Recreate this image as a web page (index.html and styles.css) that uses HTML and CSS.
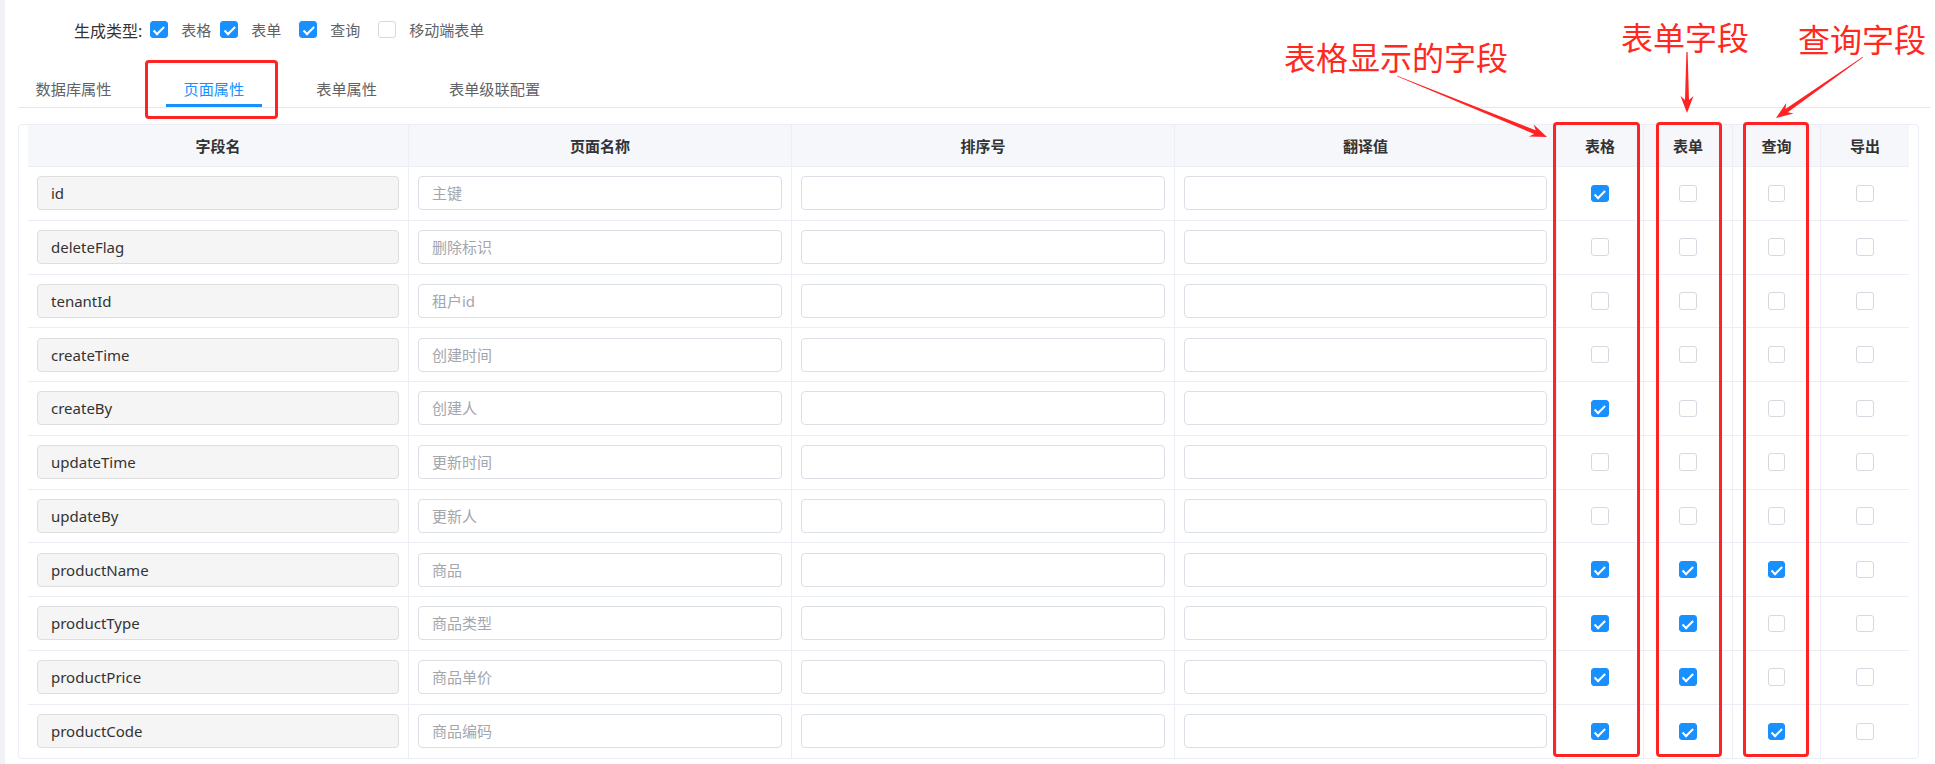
FILE: index.html
```html
<!DOCTYPE html>
<html lang="zh-CN">
<head>
<meta charset="utf-8">
<title>页面属性</title>
<link rel="stylesheet" href="styles.css">
</head>
<body>
<div class="page">
  <div class="edge"></div>
  <div class="main">
    <div class="gen-row">
      <span class="gen-label">生成类型:</span>
      <label class="gen-item tight"><span class="cb on"></span>表格</label>
      <label class="gen-item"><span class="cb on"></span>表单</label>
      <label class="gen-item"><span class="cb on"></span>查询</label>
      <label class="gen-item"><span class="cb"></span>移动端表单</label>
    </div>
    <div class="tabs">
      <div class="tab">数据库属性</div>
      <div class="tab active">页面属性</div>
      <div class="tab">表单属性</div>
      <div class="tab">表单级联配置</div>
    </div>
    <div class="table-box">
      <div class="tr th">
        <div class="c">字段名</div>
        <div class="c">页面名称</div>
        <div class="c">排序号</div>
        <div class="c">翻译值</div>
        <div class="c">表格</div>
        <div class="c">表单</div>
        <div class="c">查询</div>
        <div class="c">导出</div>
      </div>
      <div class="tr">
        <div class="c"><input class="inp" disabled value="id"></div>
        <div class="c"><input class="inp" placeholder="主键"></div>
        <div class="c"><input class="inp"></div>
        <div class="c"><input class="inp"></div>
        <div class="c k"><span class="cb on"></span></div>
        <div class="c k"><span class="cb"></span></div>
        <div class="c k"><span class="cb"></span></div>
        <div class="c k"><span class="cb"></span></div>
      </div>
      <div class="tr">
        <div class="c"><input class="inp" disabled value="deleteFlag"></div>
        <div class="c"><input class="inp" placeholder="删除标识"></div>
        <div class="c"><input class="inp"></div>
        <div class="c"><input class="inp"></div>
        <div class="c k"><span class="cb"></span></div>
        <div class="c k"><span class="cb"></span></div>
        <div class="c k"><span class="cb"></span></div>
        <div class="c k"><span class="cb"></span></div>
      </div>
      <div class="tr">
        <div class="c"><input class="inp" disabled value="tenantId"></div>
        <div class="c"><input class="inp" placeholder="租户id"></div>
        <div class="c"><input class="inp"></div>
        <div class="c"><input class="inp"></div>
        <div class="c k"><span class="cb"></span></div>
        <div class="c k"><span class="cb"></span></div>
        <div class="c k"><span class="cb"></span></div>
        <div class="c k"><span class="cb"></span></div>
      </div>
      <div class="tr">
        <div class="c"><input class="inp" disabled value="createTime"></div>
        <div class="c"><input class="inp" placeholder="创建时间"></div>
        <div class="c"><input class="inp"></div>
        <div class="c"><input class="inp"></div>
        <div class="c k"><span class="cb"></span></div>
        <div class="c k"><span class="cb"></span></div>
        <div class="c k"><span class="cb"></span></div>
        <div class="c k"><span class="cb"></span></div>
      </div>
      <div class="tr">
        <div class="c"><input class="inp" disabled value="createBy"></div>
        <div class="c"><input class="inp" placeholder="创建人"></div>
        <div class="c"><input class="inp"></div>
        <div class="c"><input class="inp"></div>
        <div class="c k"><span class="cb on"></span></div>
        <div class="c k"><span class="cb"></span></div>
        <div class="c k"><span class="cb"></span></div>
        <div class="c k"><span class="cb"></span></div>
      </div>
      <div class="tr">
        <div class="c"><input class="inp" disabled value="updateTime"></div>
        <div class="c"><input class="inp" placeholder="更新时间"></div>
        <div class="c"><input class="inp"></div>
        <div class="c"><input class="inp"></div>
        <div class="c k"><span class="cb"></span></div>
        <div class="c k"><span class="cb"></span></div>
        <div class="c k"><span class="cb"></span></div>
        <div class="c k"><span class="cb"></span></div>
      </div>
      <div class="tr">
        <div class="c"><input class="inp" disabled value="updateBy"></div>
        <div class="c"><input class="inp" placeholder="更新人"></div>
        <div class="c"><input class="inp"></div>
        <div class="c"><input class="inp"></div>
        <div class="c k"><span class="cb"></span></div>
        <div class="c k"><span class="cb"></span></div>
        <div class="c k"><span class="cb"></span></div>
        <div class="c k"><span class="cb"></span></div>
      </div>
      <div class="tr">
        <div class="c"><input class="inp" disabled value="productName"></div>
        <div class="c"><input class="inp" placeholder="商品"></div>
        <div class="c"><input class="inp"></div>
        <div class="c"><input class="inp"></div>
        <div class="c k"><span class="cb on"></span></div>
        <div class="c k"><span class="cb on"></span></div>
        <div class="c k"><span class="cb on"></span></div>
        <div class="c k"><span class="cb"></span></div>
      </div>
      <div class="tr">
        <div class="c"><input class="inp" disabled value="productType"></div>
        <div class="c"><input class="inp" placeholder="商品类型"></div>
        <div class="c"><input class="inp"></div>
        <div class="c"><input class="inp"></div>
        <div class="c k"><span class="cb on"></span></div>
        <div class="c k"><span class="cb on"></span></div>
        <div class="c k"><span class="cb"></span></div>
        <div class="c k"><span class="cb"></span></div>
      </div>
      <div class="tr">
        <div class="c"><input class="inp" disabled value="productPrice"></div>
        <div class="c"><input class="inp" placeholder="商品单价"></div>
        <div class="c"><input class="inp"></div>
        <div class="c"><input class="inp"></div>
        <div class="c k"><span class="cb on"></span></div>
        <div class="c k"><span class="cb on"></span></div>
        <div class="c k"><span class="cb"></span></div>
        <div class="c k"><span class="cb"></span></div>
      </div>
      <div class="tr">
        <div class="c"><input class="inp" disabled value="productCode"></div>
        <div class="c"><input class="inp" placeholder="商品编码"></div>
        <div class="c"><input class="inp"></div>
        <div class="c"><input class="inp"></div>
        <div class="c k"><span class="cb on"></span></div>
        <div class="c k"><span class="cb on"></span></div>
        <div class="c k"><span class="cb on"></span></div>
        <div class="c k"><span class="cb"></span></div>
      </div>
    </div>
  </div>

  <div class="anno">
    <div class="mark mark-tab"></div>
    <div class="mark mark-col1"></div>
    <div class="mark mark-col2"></div>
    <div class="mark mark-col3"></div>
    <div class="note note1">表格显示的字段</div>
    <div class="note note2">表单字段</div>
    <div class="note note3">查询字段</div>
    <svg class="arrows" width="1935" height="764" viewBox="0 0 1935 764" xmlns="http://www.w3.org/2000/svg">
      <polygon points="1396.85,76.37 1534.2,133.95 1528.8,136.6 1547,137 1533.7,124.6 1535.7,130.25 1397.15,75.63"/>
      <polygon points="1686.4,52 1685,100 1680.5,96 1687,113 1693.5,96 1689,100 1687.6,52"/>
      <polygon points="1862.77,56.67 1785.49,108.9 1786.18,102.92 1776,118 1793.64,113.56 1787.79,112.18 1863.23,57.33"/>
    </svg>
  </div>
</div>
</body>
</html>
```
FILE: styles.css
```css
* { box-sizing: border-box; }
html, body { margin: 0; padding: 0; background: #fff; }
body {
  font-family: "Noto Sans", "Noto Sans CJK SC", sans-serif;
  color: #333;
  overflow: hidden;
}
.page { position: relative; display: flex; height: 764px; }
.edge { width: 5px; flex: none; background: #f0f2f5; }
.main { flex: 1; min-width: 0; padding: 0 5px 0 13px; }

/* generate type row */
.gen-row { height: 59px; display: flex; align-items: center; padding-left: 56px; }
.gen-label { font-size: 16px; color: #333; margin-right: 8px; }
.gen-item { display: flex; align-items: center; margin-right: 18px; font-size: 15px; color: #606266; }
.gen-item.tight { margin-right: 9px; }
.gen-item .cb { margin-right: 13.5px; }

/* checkbox */
.cb {
  position: relative;
  flex: none;
  width: 17.5px; height: 17.5px;
  border: 1px solid #d6d9df;
  border-radius: 3px;
  background: #fff;
}
.cb.on { background: #1890ff; border-color: #1890ff; }
.cb.on::after {
  content: "";
  position: absolute;
  left: 5.2px; top: 2px;
  width: 4px; height: 8.5px;
  border: solid #fff;
  border-width: 0 2px 2px 0;
  transform: rotate(45deg);
}

/* tabs */
.tabs { display: flex; height: 49px; border-bottom: 1px solid #e4e7ed; }
.tab {
  display: flex; align-items: center;
  padding: 10px 17.5px 0;
  margin-right: 37px;
  font-size: 15.2px;
  color: #606266;
}
.tab.active { color: #1890ff; box-shadow: inset 0 -3px 0 #1890ff; }

/* table */
.table-box {
  margin: 16px 11px 0 0;
  border: 1px solid #ebeef5;
  border-radius: 4px;
  padding: 0 9px;
}
.tr {
  display: grid;
  grid-template-columns: 381px 383px 383px 382px 87px 89px 88px 88px;
  height: 53.75px;
  border-bottom: 1px solid #ebeef5;
}
.tr:last-child { border-bottom: 0; }
.tr.th { height: 42px; background: #f5f7fa; }
.c {
  display: flex; align-items: center;
  padding: 0 9px;
  border-right: 1px solid #ebeef5;
  min-width: 0;
}
.c:last-child { border-right: 0; }
.th .c { justify-content: center; font-size: 15px; font-weight: 700; color: #333; }
.c.k { justify-content: center; padding: 0; }

.inp {
  width: 100%;
  height: 34px;
  margin: 0;
  padding: 0 13px;
  border: 1px solid #dcdfe6;
  border-radius: 4px;
  background: #fff;
  font-family: "Noto Sans", "Noto Sans CJK SC", sans-serif;
  font-size: 15px;
  color: #333;
  outline: none;
}
.inp::placeholder { color: #a3a6ad; }
.inp:disabled { background: #f5f5f5; border-color: #dedede; color: #333; -webkit-text-fill-color: #333; opacity: 1; }

/* annotations drawn over the screenshot */
.anno { position: absolute; left: 0; top: 0; width: 1935px; height: 764px; pointer-events: none; }
.mark { position: absolute; border: 3px solid #ff2323; border-radius: 4px; }
.mark-tab { left: 145px; top: 60px; width: 133px; height: 59px; }
.mark-col1 { left: 1553px; top: 122px; width: 87px; height: 635px; }
.mark-col2 { left: 1656px; top: 122px; width: 66px; height: 635px; }
.mark-col3 { left: 1743px; top: 122px; width: 66px; height: 635px; }
.note {
  position: absolute;
  font-family: "Noto Sans CJK SC", sans-serif;
  font-size: 32px;
  line-height: 1;
  color: #ff2a1f;
  white-space: nowrap;
}
.note1 { left: 1284px; top: 40px; }
.note2 { left: 1621px; top: 20px; }
.note3 { left: 1798px; top: 22px; }
.arrows { position: absolute; left: 0; top: 0; }
.arrows polygon { fill: #ff2323; }
```
